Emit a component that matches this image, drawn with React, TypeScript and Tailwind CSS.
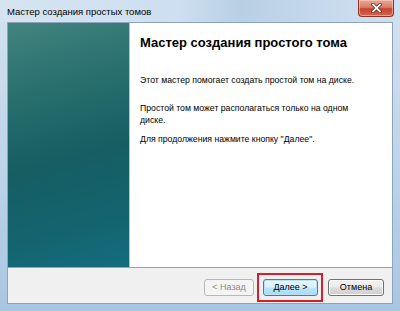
import React from 'react';

const FONT = { fontFamily: '"Liberation Sans", Arial, sans-serif' };

function WinButton({ label, disabled, primary, width }: { label: string; disabled?: boolean; primary?: boolean; width: string }) {
  if (disabled) {
    return (
      <div className={`${width} h-[17px] rounded-[3px] border border-[#b5b8bb] bg-[#f4f4f4] flex items-center justify-center text-[9px] text-[#8a8a8a]`}>
        {label}
      </div>
    );
  }
  return (
    <div
      className={`${width} h-[17px] rounded-[3px] border flex items-center justify-center text-[9px] text-black ${
        primary
          ? 'border-[#3c7fb1] bg-[linear-gradient(180deg,#eaf6fd_0%,#d9f0fc_48%,#bee6fd_52%,#a7d9f5_100%)] shadow-[inset_0_0_0_1px_#b6e3f8]'
          : 'border-[#707070] bg-[linear-gradient(180deg,#f2f2f2_0%,#ebebeb_48%,#dddddd_52%,#cfcfcf_100%)] shadow-[inset_0_0_0_1px_#fcfcfc]'
      }`}
    >
      {label}
    </div>
  );
}

export default function App() {
  return (
    <div
      className="w-[400px] h-[311px] flex flex-col overflow-hidden bg-[linear-gradient(180deg,#d4e3f1_0%,#c3d7ea_40%,#a9c6e2_100%)]"
      style={FONT}
    >
      {/* Title bar */}
      <div className="h-[22px] shrink-0 flex items-start justify-between bg-[linear-gradient(90deg,#d6e4f1_0%,#cddff0_45%,#b9cfe4_60%,#c6d9ec_80%,#cfe0f0_100%)]">
        <div className="pl-[7px] pt-[6px] text-[9.5px] leading-[12px] text-black">Мастер создания простых томов</div>
        <div className="mr-[6px] w-[36px] h-[17px] rounded-b-[4px] border border-t-0 border-[#8e3326] bg-[linear-gradient(180deg,#e9a796_0%,#d8806c_45%,#c7432e_55%,#d2664d_100%)] shadow-[inset_0_0_0_1px_rgba(255,220,210,0.5)] flex items-center justify-center">
          <svg width="11" height="10" viewBox="0 0 11 10">
            <path d="M2 1.5 L9 8.5 M9 1.5 L2 8.5" stroke="#5a1a12" strokeWidth="3.2" strokeLinecap="square" />
            <path d="M2 1.5 L9 8.5 M9 1.5 L2 8.5" stroke="#ffffff" strokeWidth="1.8" strokeLinecap="square" />
          </svg>
        </div>
      </div>

      {/* Client area */}
      <div className="mx-[7px] mb-[7px] flex-1 flex flex-col border border-[#8ea4ba] bg-white">
        <div className="flex-1 flex">
          <div className="w-[122px] bg-[linear-gradient(165deg,#43847f_0%,#2a716f_25%,#155d62_55%,#14646f_80%,#146c7e_100%)] border-r border-[#b7c4c6]" />
          <div className="flex-1 pl-[10px] pt-[12px] text-black">
            <div className="text-[13px] leading-[16px] font-bold">Мастер создания простого тома</div>
            <div className="mt-[23px] text-[8.7px] leading-[12px]">Этот мастер помогает создать простой том на диске.</div>
            <div className="mt-[16px] text-[8.7px] leading-[12px]">
              Простой том может располагаться только на одном
              <br />
              диске.
            </div>
            <div className="mt-[7px] text-[8.7px] leading-[12px]">Для продолжения нажмите кнопку "Далее".</div>
          </div>
        </div>
        <div className="h-[36px] shrink-0 bg-[#f0f0f0] border-t border-[#a0a0a0] flex items-start justify-end pt-[11px] pr-[8px]">
          <WinButton label="< Назад" disabled width="w-[50px]" />
          <div className="ml-[3px] -mt-[6px] border-2 border-[#d3202c] p-[4px] pr-[3px]">
            <WinButton label="Далее >" primary width="w-[55px]" />
          </div>
          <div className="ml-[5px]">
            <WinButton label="Отмена" width="w-[56px]" />
          </div>
        </div>
      </div>
    </div>
  );
}
